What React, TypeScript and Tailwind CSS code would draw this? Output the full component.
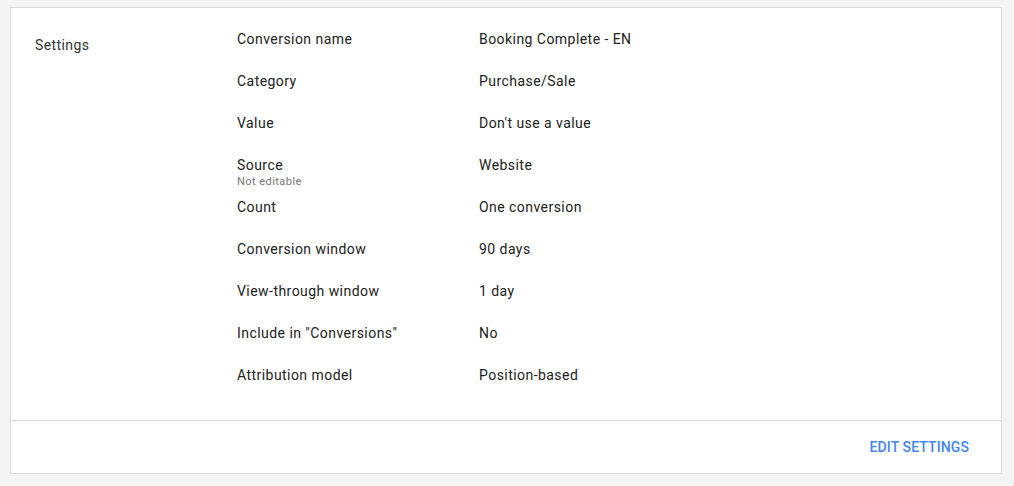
const rows: { label: string; value: string; note?: string }[] = [
  { label: "Conversion name", value: "Booking Complete - EN" },
  { label: "Category", value: "Purchase/Sale" },
  { label: "Value", value: "Don't use a value" },
  { label: "Source", value: "Website", note: "Not editable" },
  { label: "Count", value: "One conversion" },
  { label: "Conversion window", value: "90 days" },
  { label: "View-through window", value: "1 day" },
  { label: "Include in \"Conversions\"", value: "No" },
  { label: "Attribution model", value: "Position-based" },
];

export default function App() {
  return (
    <div className="min-h-[486px] bg-[#f4f4f4] pt-[7px] pl-[10px] pr-[12px] font-['Roboto',sans-serif]">
      <div className="flex h-[467px] flex-col border border-[#dadada] bg-white">
        <div className="flex flex-1 pt-[21px]">
          <div className="w-[226px] pl-[24px] pt-[6px] text-[14px] leading-5 tracking-[0.4px] text-[#333]">
            Settings
          </div>
          <div className="flex flex-col">
            {rows.map((r) => (
              <div
                key={r.label}
                className="flex h-[42px] text-[14px] leading-5 tracking-[0.45px] text-[#212121]"
              >
                <div className="w-[242px]">
                  <div>{r.label}</div>
                  {r.note ? (
                    <div className="text-[11px] leading-[13px] tracking-[0.45px] text-[#757575]">
                      {r.note}
                    </div>
                  ) : null}
                </div>
                <div>{r.value}</div>
              </div>
            ))}
          </div>
        </div>
        <div className="flex h-[53px] items-center justify-end border-t border-[#dadada] pr-[32px]">
          <button className="text-[14px] font-medium uppercase tracking-[0.1px] text-[#4285f4]">
            Edit settings
          </button>
        </div>
      </div>
    </div>
  );
}
